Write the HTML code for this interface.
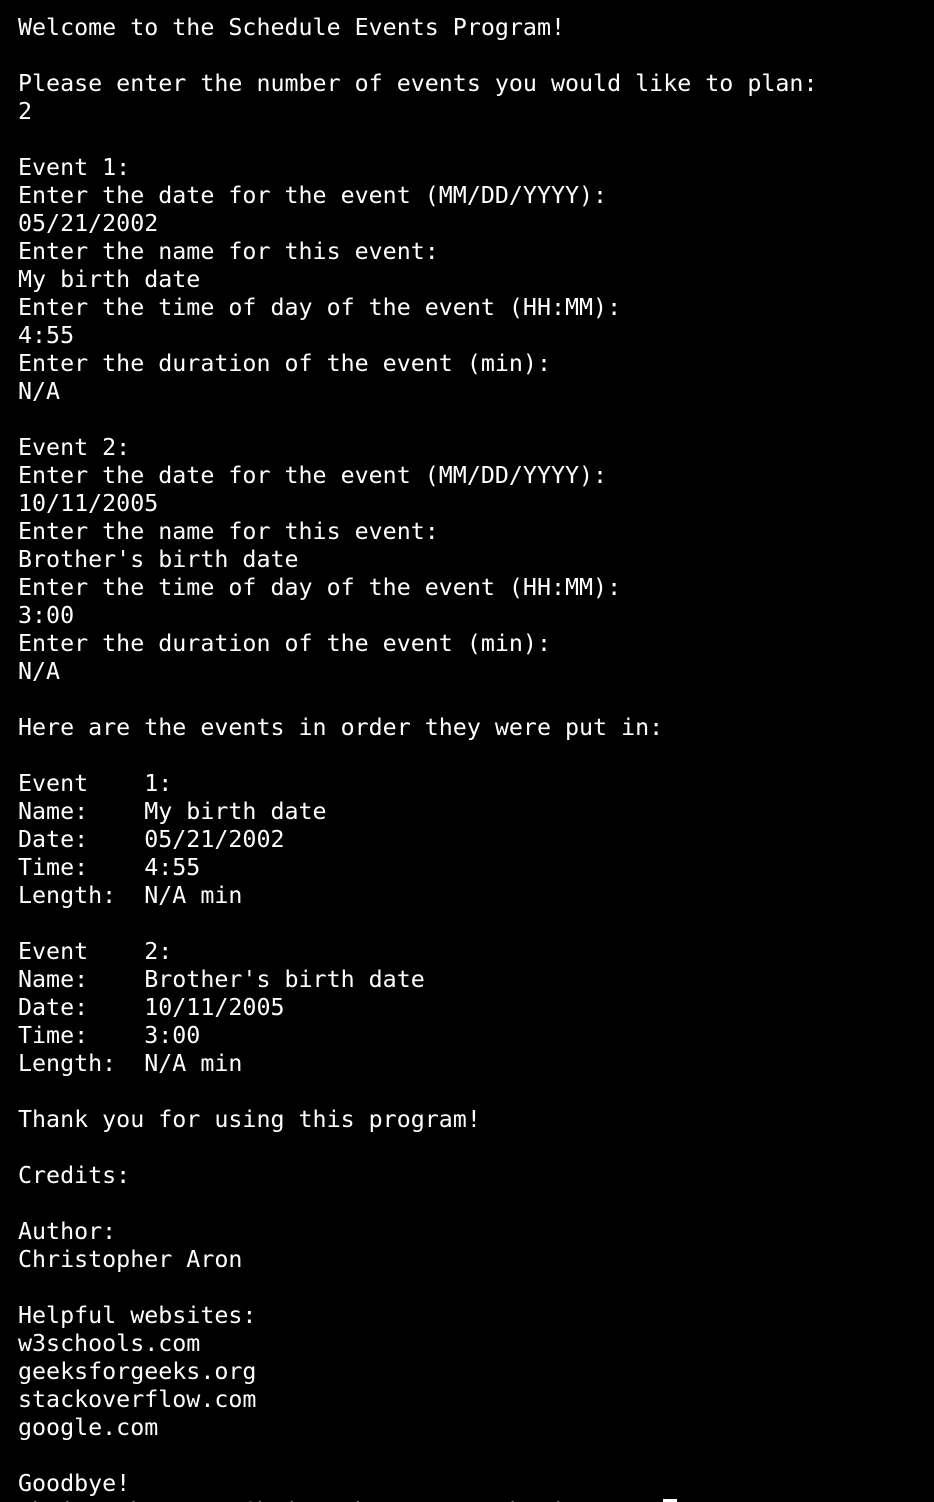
<!DOCTYPE html>
<html><head><meta charset="utf-8"><style>
html,body{margin:0;padding:0;background:#000;width:934px;height:1502px;overflow:hidden}
pre{margin:0;padding:14px 0 0 18px;font-family:"DejaVu Sans Mono","Liberation Mono",monospace;font-size:23.3px;line-height:28px;color:#fff;white-space:pre}
.c{display:inline-block;width:14px;height:26px;background:#fff;vertical-align:-6px}
</style></head><body><pre>Welcome to the Schedule Events Program!

Please enter the number of events you would like to plan:
2

Event 1:
Enter the date for the event (MM/DD/YYYY):
05/21/2002
Enter the name for this event:
My birth date
Enter the time of day of the event (HH:MM):
4:55
Enter the duration of the event (min):
N/A

Event 2:
Enter the date for the event (MM/DD/YYYY):
10/11/2005
Enter the name for this event:
Brother's birth date
Enter the time of day of the event (HH:MM):
3:00
Enter the duration of the event (min):
N/A

Here are the events in order they were put in:

Event    1:
Name:    My birth date
Date:    05/21/2002
Time:    4:55
Length:  N/A min

Event    2:
Name:    Brother's birth date
Date:    10/11/2005
Time:    3:00
Length:  N/A min

Thank you for using this program!

Credits:

Author:
Christopher Aron

Helpful websites:
w3schools.com
geeksforgeeks.org
stackoverflow.com
google.com

Goodbye!
christopheraron@Christophers-MacBook-Air ~ %  <span class="c"></span></pre></body></html>
